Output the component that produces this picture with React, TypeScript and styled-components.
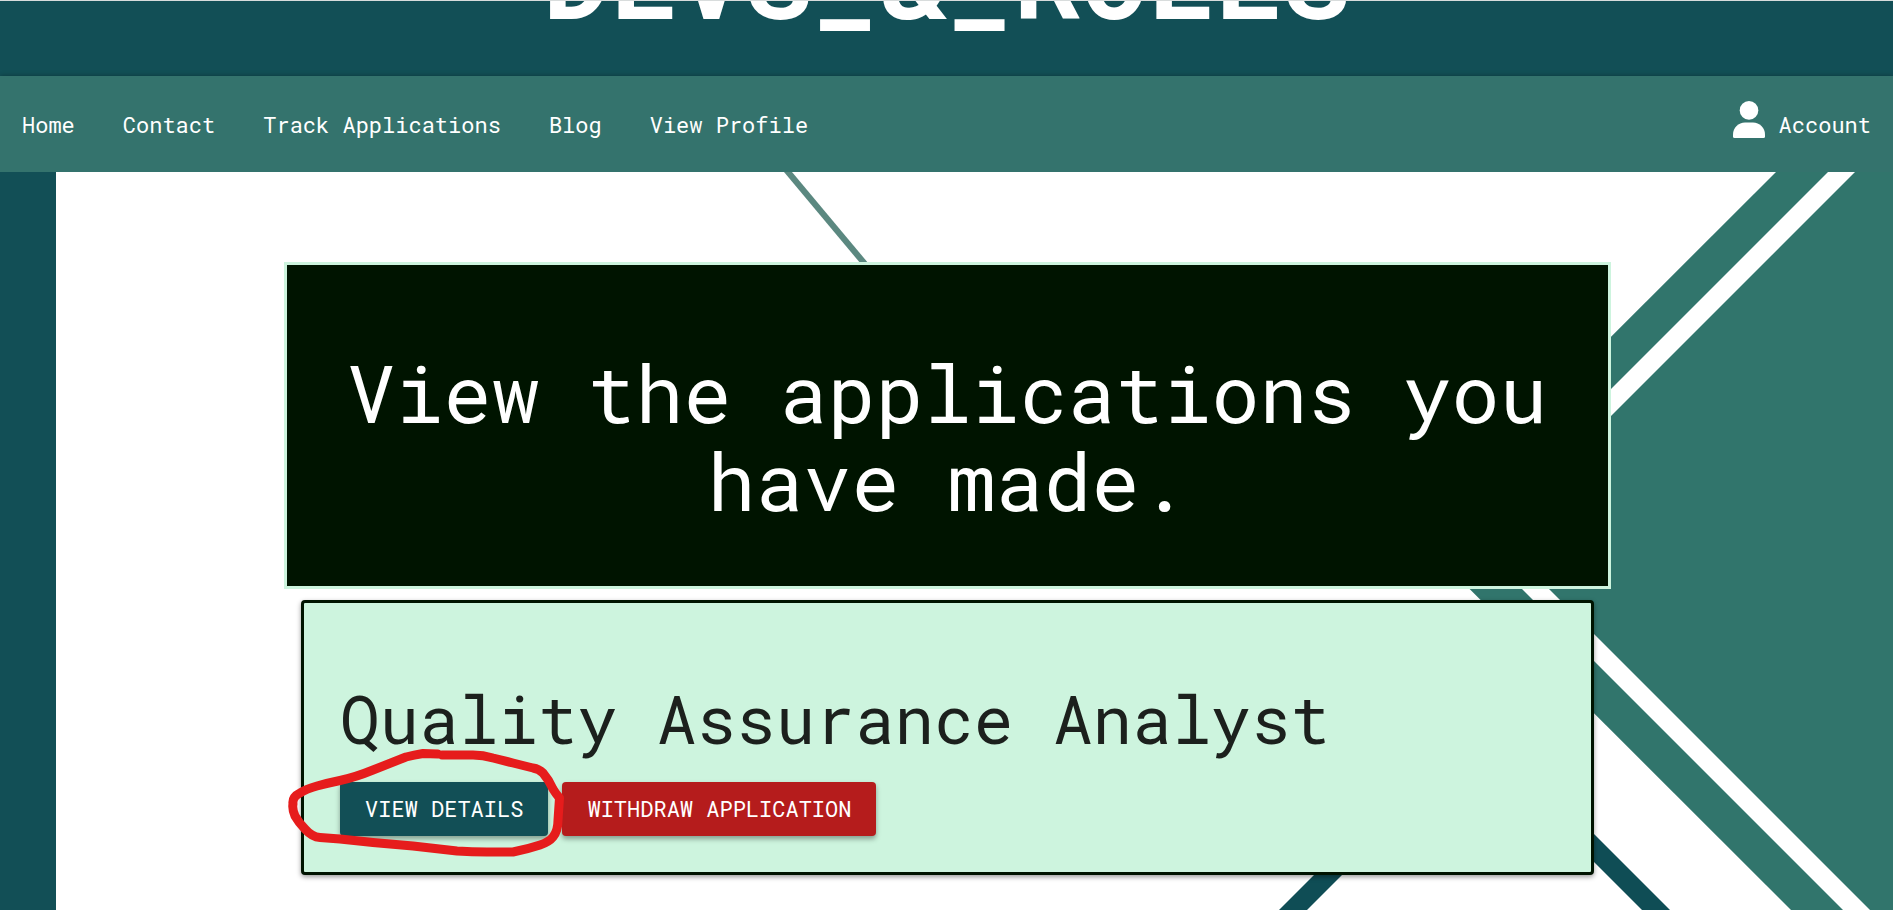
import React from "react";
import styled, { createGlobalStyle } from "styled-components";

const palette = {
  deep: "#124f56",
  nav: "#34736d",
  teal: "#31756c",
  ink: "#001400",
  mint: "#cdf4de",
  danger: "#b51c1c",
  mark: "#e61c1c",
};

const GlobalStyle = createGlobalStyle`
  *, *::before, *::after { box-sizing: border-box; }
  html, body, #root { height: 100%; }
  body {
    margin: 0;
    overflow: hidden;
    background: #fff;
    font-family: "Roboto Mono", "DejaVu Sans Mono", monospace;
  }
`;

const Page = styled.div`
  display: flex;
  flex-direction: column;
  min-height: 100%;
`;

const Banner = styled.header`
  display: flex;
  flex-direction: column;
  justify-content: flex-end;
  align-items: center;
  height: 76px;
  padding-bottom: 44px;
  overflow: hidden;
  border-top: 1px solid #d8dcdc;
  background: ${palette.deep};
`;

const SiteName = styled.h1`
  flex: none;
  margin: 0;
  color: #fff;
  font-size: 112px;
  font-weight: 700;
  line-height: 112px;
  white-space: nowrap;
`;

const NavBar = styled.nav`
  position: relative;
  display: flex;
  flex: none;
  align-items: center;
  justify-content: space-between;
  height: 96px;
  padding: 2px 22px 0;
  background: ${palette.nav};
  box-shadow: 0 0 5px rgba(0, 0, 0, 0.3);
`;

const NavLinks = styled.div`
  display: flex;
  gap: 48px;
`;

const NavLink = styled.a`
  display: flex;
  align-items: center;
  gap: 14px;
  color: #fff;
  font-size: 22px;
  line-height: 32px;
  text-decoration: none;
  white-space: nowrap;
`;

const AccountIcon = styled.svg`
  display: block;
  width: 32px;
  height: 48px;
`;

const Main = styled.main`
  position: relative;
  isolation: isolate;
  flex: 1;
  padding: 90px 282px 34px 284px;
  background: #fff;

  @media (max-width: 1200px) {
    padding: 48px 5%;
  }
`;

const Backdrop = styled.svg`
  position: absolute;
  inset: 0;
  z-index: -1;
  width: 100%;
  height: 100%;
`;

const Hero = styled.section`
  padding: 83px 24px 62px;
  border: 3px solid ${palette.mint};
  background: ${palette.ink};
`;

const HeroTitle = styled.h2`
  margin: 0;
  color: #fff;
  font-size: 80px;
  font-weight: 400;
  line-height: 88px;
  text-align: center;
`;

const Card = styled.article`
  margin: 11px 17px 0;
  padding: 76px 36px 36px;
  border: 3px solid ${palette.ink};
  border-radius: 4px;
  background: ${palette.mint};
  box-shadow: 0 2px 5px rgba(0, 0, 0, 0.4);
`;

const JobTitle = styled.h3`
  margin: 0 0 23px;
  color: #1c201d;
  font-size: 66px;
  font-weight: 400;
  line-height: 80px;
`;

const Actions = styled.div`
  position: relative;
  display: flex;
  gap: 14px;
`;

const ActionButton = styled.button<{ $tone: string }>`
  height: 54px;
  padding: 0 25px;
  border: 0;
  border-radius: 4px;
  background: ${(p) => p.$tone};
  color: #fff;
  font-family: inherit;
  font-size: 22px;
  line-height: 32px;
  text-transform: uppercase;
  white-space: nowrap;
  cursor: pointer;
  box-shadow: 0 3px 5px rgba(0, 0, 0, 0.35);
`;

const Scribble = styled.svg`
  position: absolute;
  top: -42px;
  left: -56px;
  width: 284px;
  height: 120px;
  pointer-events: none;
`;

const links = ["Home", "Contact", "Track Applications", "Blog", "View Profile"];

export default function App() {
  return (
    <Page>
      <GlobalStyle />
      <Banner>
        <SiteName>DEVS_&amp;_ROLES</SiteName>
      </Banner>
      <NavBar>
        <NavLinks>
          {links.map((label) => (
            <NavLink key={label} href="#">
              {label}
            </NavLink>
          ))}
        </NavLinks>
        <NavLink href="#">
          <AccountIcon viewBox="0 0 32 48" fill="#fff" aria-hidden="true">
            <circle cx="16" cy="9.400" r="9.300" />
            <path d="M0 35.500v-2C0 26.500 5.500 21.500 12 21.500h8c6.500 0 12 5 12 12v2q0 1.500-1.500 1.500h-29q-1.500 0-1.500-1.500z" />
          </AccountIcon>
          Account
        </NavLink>
      </NavBar>
      <Main>
        <Backdrop viewBox="0 172 1893 738" preserveAspectRatio="xMidYMid slice" aria-hidden="true">
          <rect x="0" y="172" width="56" height="738" fill={palette.deep} />
          <path d="M784 172h8l92 110h-8z" fill="#5b8880" />
          <path d="M1776 172L1414 533.500L1791 910H1893V172z" fill={palette.teal} />
          <path d="M1828 172L1466.500 533.500L1843 910H1870L1493.500 533.500L1855 172z" fill="#fff" />
          <path d="M1279 910L1474.500 714.500L1670 910H1642L1474.500 742.500L1307 910z" fill="#0f4d55" />
        </Backdrop>
        <Hero>
          <HeroTitle>View the applications you have made.</HeroTitle>
        </Hero>
        <Card>
          <JobTitle>Quality Assurance Analyst</JobTitle>
          <Actions>
            <ActionButton type="button" $tone={palette.deep}>
              View Details
            </ActionButton>
            <ActionButton type="button" $tone={palette.danger}>
              Withdraw Application
            </ActionButton>
            <Scribble
              viewBox="284 740 284 120"
              fill="none"
              stroke={palette.mark}
              strokeWidth="9"
              strokeLinecap="round"
              strokeLinejoin="round"
              aria-hidden="true"
            >
              <path d="M438 754L423 753.500Q414 755 406 757L373 770Q356 777 340 780.500Q328 783 317 786Q306 789 300 793Q292 797 293 804Q292 809 295 816Q299 823 305 829Q312 837 320 837.500L340 839L373 842.500L413 846L457 851Q472 852 487 852H513Q528 849 540 845Q549 842 553 837Q558 831 558 820L559.500 798Q556 794 553 789Q549 780 543 773Q539 769 533 768L513 763L493 758Q483 755 473 755H442" />
            </Scribble>
          </Actions>
        </Card>
      </Main>
    </Page>
  );
}
